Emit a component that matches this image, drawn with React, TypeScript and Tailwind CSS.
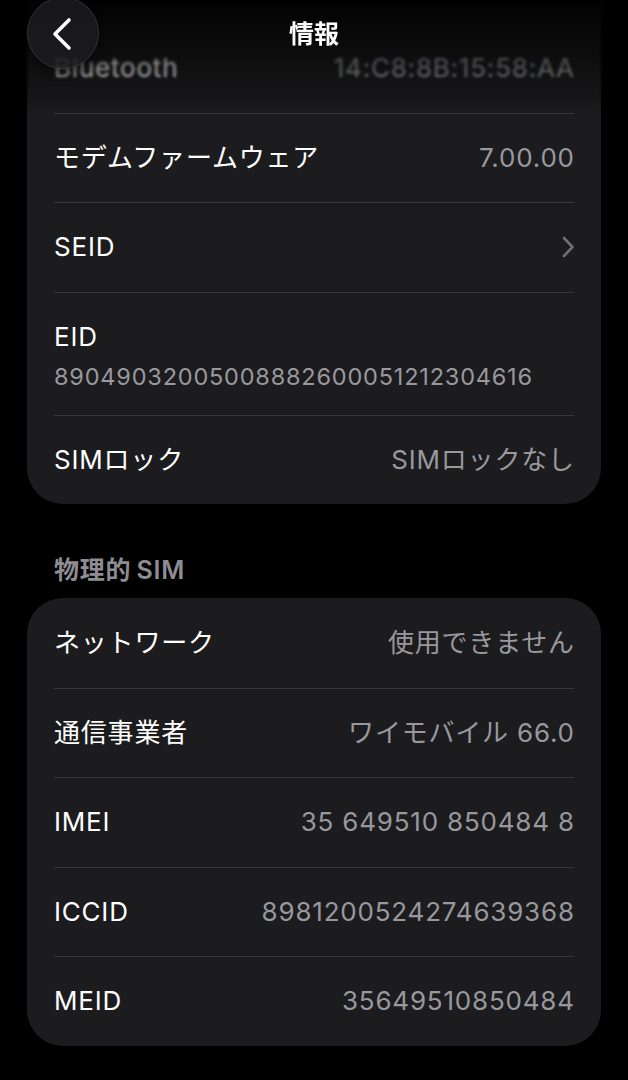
import React from 'react';

type Row = { label: string; value?: string; chevron?: boolean };

const font = { fontFamily: 'Inter, "Noto Sans CJK JP", sans-serif' };

const topRows: Row[] = [
  { label: 'Bluetooth', value: '14:C8:8B:15:58:AA' },
  { label: 'モデムファームウェア', value: '7.00.00' },
  { label: 'SEID', chevron: true },
];

const simRows: Row[] = [
  { label: 'ネットワーク', value: '使用できません' },
  { label: '通信事業者', value: 'ワイモバイル 66.0' },
  { label: 'IMEI', value: '35 649510 850484 8' },
  { label: 'ICCID', value: '8981200524274639368' },
  { label: 'MEID', value: '35649510850484' },
];

const InfoRow: React.FC<{ row: Row; first?: boolean }> = ({ row, first }) => (
  <div
    className={`h-[89.5px] flex items-center justify-between ${first ? '' : 'border-t border-[#38383a]'}`}
  >
    <span className="text-[26px] leading-none tracking-[0.8px] text-white">{row.label}</span>
    {row.chevron ? (
      <svg width="14" height="24" viewBox="0 0 14 24" className="mr-[-1px]">
        <path d="M3 3 L11.5 12 L3 21" fill="none" stroke="#6e6e73" strokeWidth="2.6" strokeLinecap="round" strokeLinejoin="round" />
      </svg>
    ) : (
      <span className="text-[26px] leading-none tracking-[0.8px] text-[#98989e] mr-[-0.8px]">{row.value}</span>
    )}
  </div>
);

export default function App() {
  return (
    <div className="relative h-[1080px] w-full overflow-hidden bg-black" style={font}>
      <div className="px-[27px]">
        {/* 上のカード（上端は画面外） */}
        <div className="-mt-[67px] rounded-[36px] bg-[#1c1c1e] px-[27px] pt-[90px]">
          {topRows.map((r) => (
            <InfoRow key={r.label} row={r} first={r.label === 'Bluetooth'} />
          ))}
          <div className="h-[123px] border-t border-[#38383a] pt-[28px]">
            <div className="text-[26px] leading-[32px] tracking-[0.8px] text-white">EID</div>
            <div className="mt-[9px] text-[23.5px] leading-[30px] tracking-[0.8px] text-[#98989e]">
              89049032005008882600051212304616
            </div>
          </div>
          <InfoRow row={{ label: 'SIMロック', value: 'SIMロックなし' }} />
        </div>

        {/* 物理的SIM */}
        <div className="px-[27px] pt-[50px] pb-[12px] text-[25px] leading-[32px] tracking-[0.8px] font-semibold text-[#8d8d93]">
          物理的<span className="ml-[5px]">SIM</span>
        </div>
        <div className="rounded-[36px] bg-[#1c1c1e] px-[27px]">
          {simRows.map((r, i) => (
            <InfoRow key={r.label} row={r} first={i === 0} />
          ))}
        </div>
      </div>

      {/* ヘッダー */}
      <div className="absolute inset-x-0 top-0 h-[112px]">
        <div className="absolute inset-0 backdrop-blur-[1.5px] [mask-image:linear-gradient(to_bottom,black_65%,transparent)]" />
        <div className="absolute inset-0 bg-[linear-gradient(to_bottom,rgba(0,0,0,0.93)_0%,rgba(0,0,0,0.45)_58%,rgba(0,0,0,0)_100%)]" />
        <div className="relative flex h-[70px] items-center justify-center">
          <span className="text-[25px] font-semibold text-white">情報</span>
        </div>
        <button className="absolute left-[27px] top-[-3px] flex h-[72px] w-[72px] items-center justify-center rounded-full border border-[#333335] bg-[#1c1c1e]/85 shadow-[0_4px_16px_rgba(0,0,0,0.5)]">
          <svg width="30" height="36" viewBox="0 0 30 36">
            <path d="M21 5 L7 19 L21 33" fill="none" stroke="white" strokeWidth="3.6" strokeLinecap="round" strokeLinejoin="round" />
          </svg>
        </button>
      </div>
    </div>
  );
}
